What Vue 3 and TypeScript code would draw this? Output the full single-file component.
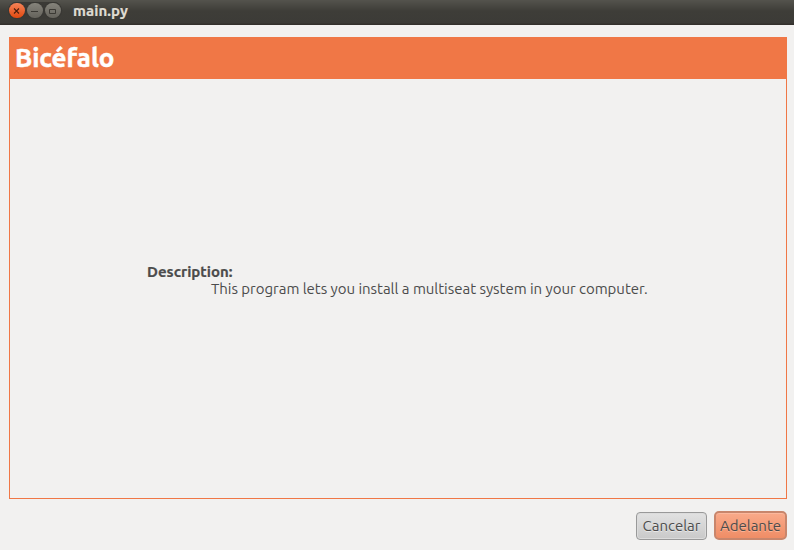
<script setup lang="ts">
import { ref } from 'vue'

const windowTitle = ref<string>('main.py')
const heading = ref<string>('Bicéfalo')
</script>

<template>
  <div class="window">
    <header class="titlebar">
      <div class="controls">
        <button class="control close" aria-label="Close">
          <svg viewBox="0 0 16 16"><path d="M5 5.5l5 5M10 5.5l-5 5" /></svg>
        </button>
        <button class="control" aria-label="Minimize">
          <svg viewBox="0 0 16 16"><path d="M4 8.5h7" /></svg>
        </button>
        <button class="control" aria-label="Maximize">
          <svg viewBox="0 0 16 16"><path d="M4.5 6.5h6v4h-6z" /></svg>
        </button>
      </div>
      <span class="window-title">{{ windowTitle }}</span>
    </header>
    <main class="assistant">
      <h1 class="heading">{{ heading }}</h1>
      <section class="page">
        <dl class="description">
          <dt>Description:</dt>
          <dd>This program lets you install a multiseat system in your computer.</dd>
        </dl>
      </section>
    </main>
    <footer class="actions">
      <button class="action cancel"><span>Cancelar</span></button>
      <button class="action forward"><span>Adelante</span></button>
    </footer>
  </div>
</template>

<style>
body {
  margin: 0;
  background: #f2f1f0;
}
</style>

<style scoped>
.window {
  box-sizing: border-box;
  width: 794px;
  height: 550px;
  display: flex;
  flex-direction: column;
  overflow: hidden;
  background: #f2f1f0;
  color: #4c4c4c;
  font-family: Ubuntu, "Noto Sans", sans-serif;
}
.titlebar {
  box-sizing: border-box;
  height: 25px;
  flex: none;
  display: flex;
  align-items: flex-start;
  padding-left: 8px;
  background: linear-gradient(#54534d, #3e3d38 11px, #3c3b37 23px, #33302c 24px);
}
.controls {
  display: flex;
  gap: 2.5px;
  margin-top: 1.5px;
  padding: 1px;
  border-radius: 10px;
  background: #3b3a36;
}
.control {
  box-sizing: border-box;
  width: 15.5px;
  height: 15.5px;
  padding: 0;
  border: 0;
  border-radius: 50%;
  background: linear-gradient(#85837b, #65635c);
  box-shadow: 0 0 0 1px #393834;
}
.control.close {
  background: linear-gradient(#f58358, #e2490f);
}
.control svg {
  display: block;
  width: 16px;
  height: 16px;
  fill: none;
  stroke: #3b3934;
  stroke-width: 1;
}
.close svg {
  stroke: #4b1d0c;
  stroke-width: 1.1;
}
.window-title {
  margin-left: 11.5px;
  color: #dfdbd2;
  font-size: 15px;
  font-weight: 700;
  line-height: 21px;
  letter-spacing: 0.07px;
  -webkit-text-stroke: 0.2px #dfdbd2;
}
.assistant {
  box-sizing: border-box;
  width: 778px;
  height: 462px;
  flex: none;
  margin: 12px 0 0 9px;
  display: flex;
  flex-direction: column;
  border: 1px solid #f07746;
}
.heading {
  margin: 0;
  height: 41px;
  padding-left: 5px;
  background: #f07746;
  color: #fff;
  font-size: 26px;
  font-weight: 700;
  line-height: 40px;
  letter-spacing: -0.08px;
  -webkit-text-stroke: 0.5px #fff;
}
.page {
  flex: 1;
  padding: 184px 0 0 137px;
}
.description {
  margin: 0;
  font-size: 15px;
  line-height: 17px;
  white-space: nowrap;
}
dt {
  font-weight: 700;
  -webkit-text-stroke: 0.2px #4c4c4c;
}
dd {
  margin: 0 0 0 64px;
  letter-spacing: -0.03px;
}
.actions {
  display: flex;
  justify-content: flex-end;
  align-items: center;
  gap: 7px;
  padding: 12px 7px 0 0;
}
.action {
  box-sizing: border-box;
  display: flex;
  justify-content: center;
  align-items: center;
  padding: 0;
  color: #4c4c4c;
  font-family: inherit;
  font-size: 15px;
  line-height: 20px;
  white-space: nowrap;
}
.cancel {
  width: 71px;
  height: 28px;
  border: 1px solid #999;
  border-radius: 4px;
  background: linear-gradient(#e2e2e2, #c9c9c9);
  box-shadow: inset 0 0 0 1px #dcdcdc;
  text-shadow: 0 1px #e8e8e8;
}
.forward {
  width: 73px;
  height: 29px;
  border: 2px solid #c8866c;
  border-radius: 5px;
  background: linear-gradient(#f9aa8a, #ef8d66);
  box-shadow: inset 0 1px #fbb89d;
  text-shadow: 0 1px #f9b396;
}
</style>
